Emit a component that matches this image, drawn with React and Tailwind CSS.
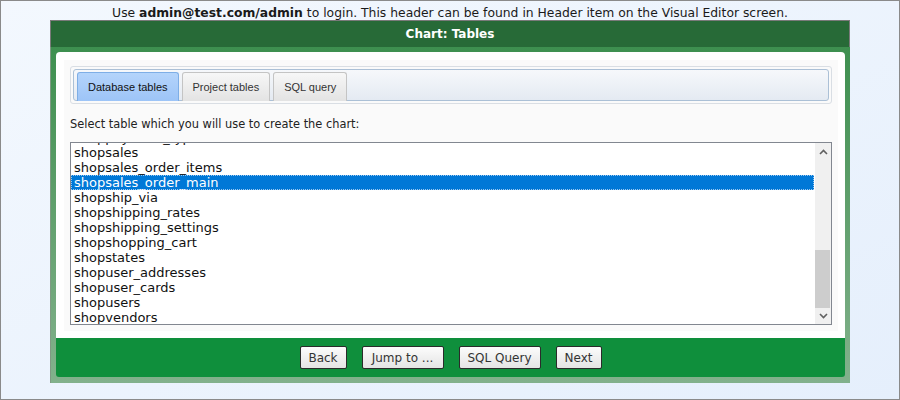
import React from "react";

const tables = [
  "shoppayment_types",
  "shopsales",
  "shopsales_order_items",
  "shopsales_order_main",
  "shopship_via",
  "shopshipping_rates",
  "shopshipping_settings",
  "shopshopping_cart",
  "shopstates",
  "shopuser_addresses",
  "shopuser_cards",
  "shopusers",
  "shopvendors",
];

const tabs = ["Database tables", "Project tables", "SQL query"];
const buttons = [
  { label: "Back", w: "w-[47px]" },
  { label: "Jump to ...", w: "w-[82px]" },
  { label: "SQL Query", w: "w-[82px]" },
  { label: "Next", w: "w-[46px]" },
];

function Chevron({ up }) {
  return (
    <svg width="9" height="6" viewBox="0 0 9 6" className="text-[#606060]">
      <path d={up ? "M1 5L4.5 1.5L8 5" : "M1 1L4.5 4.5L8 1"} stroke="currentColor" strokeWidth="1.6" fill="none" />
    </svg>
  );
}

export default function App() {
  const selected = "shopsales_order_main";
  return (
    <div className="w-[900px] h-[400px] border border-[#8a8a8a] bg-gradient-to-br from-[#f3f8fe] to-[#e5effc] flex flex-col items-center font-['DejaVu_Sans',sans-serif] text-[#222]">
      <div className="h-[19px] leading-[24px] text-[12.35px] text-[#1a1a1a] whitespace-nowrap">
        Use <b>admin@test.com/admin</b> to login. This header can be found in Header item on the Visual Editor screen.
      </div>

      <div className="w-[800px] flex flex-col">
        {/* title bar */}
        <div className="h-[27px] bg-[#276a37] border-t border-l border-r border-[#7a7a7a] flex items-center justify-center text-white font-bold text-[12px]">
          Chart: Tables
        </div>

        {/* frame */}
        <div className="bg-gradient-to-b from-[#3d8f4f] to-[#82b18c] border-l border-[#7f9a84] px-[5px] pt-[5px] pb-[6px]">
          <div className="bg-white rounded-t-[4px] h-[286px] p-[8px] pr-[7px] pb-[7px]">
            <div className="bg-[#fafafa] h-full p-[6px] flex flex-col">
              {/* tabs */}
              <div className="border border-[#d9dee4] rounded-[3px] p-[2px]">
                <div className="h-[32px] border border-[#abc0d6] rounded-[3px] bg-gradient-to-b from-[#f6f8fb] to-[#e4eaf2] px-[3px] flex items-end gap-[3px]">
                  {tabs.map((t, i) => (
                    <div
                      key={t}
                      className={`h-[29px] -mb-[1px] px-[10px] flex items-center rounded-t-[3px] border border-b-0 text-[11px] font-['Liberation_Sans',sans-serif] ${
                        i === 0
                          ? "border-[#7eaee6] bg-gradient-to-b from-[#b4d4fb] to-[#9dc4f7] text-[#111]"
                          : "border-[#c4c4c4] bg-gradient-to-b from-[#f7f7f7] to-[#e3e3e3] text-[#333]"
                      }`}
                    >
                      {t}
                    </div>
                  ))}
                </div>
              </div>

              <div className="mt-[14px] text-[11.4px] text-[#222] leading-[13px] whitespace-nowrap">
                Select table which you will use to create the chart:
              </div>

              {/* listbox */}
              <div className="mt-[11px] h-[183px] border border-[#828790] bg-white flex overflow-hidden">
                <div className="flex-1 overflow-hidden pr-[1px]">
                  <div className="-mt-[13px] text-[13px] leading-[15px]">
                    {tables.map((t) => (
                      <div
                        key={t}
                        className={`h-[15px] pl-[3px] whitespace-nowrap ${
                          t === selected
                            ? "bg-[#0078d7] text-white outline outline-1 outline-dotted outline-[#9cc8f0] -outline-offset-1"
                            : "text-[#111]"
                        }`}
                      >
                        {t}
                      </div>
                    ))}
                  </div>
                </div>
                <div className="w-[16px] bg-[#f0f0f0] flex flex-col">
                  <div className="h-[17px] flex items-center justify-center">
                    <Chevron up />
                  </div>
                  <div className="flex-1 flex flex-col justify-end">
                    <div className="h-[58px] bg-[#cdcdcd] mr-[1px]" />
                  </div>
                  <div className="h-[16px] flex items-center justify-center">
                    <Chevron />
                  </div>
                </div>
              </div>
            </div>
          </div>

          {/* footer */}
          <div className="h-[39px] bg-[#0f8f3c] rounded-b-[3px] flex items-center justify-center gap-[15px]">
            {buttons.map((b) => (
              <button
                key={b.label}
                className={`${b.w} h-[23px] border border-[#2b2b2b] rounded-[2px] bg-gradient-to-b from-[#fcfcfc] to-[#e4e4e4] text-[12px] text-[#333] leading-none whitespace-nowrap`}
              >
                {b.label}
              </button>
            ))}
          </div>
        </div>
      </div>
    </div>
  );
}
